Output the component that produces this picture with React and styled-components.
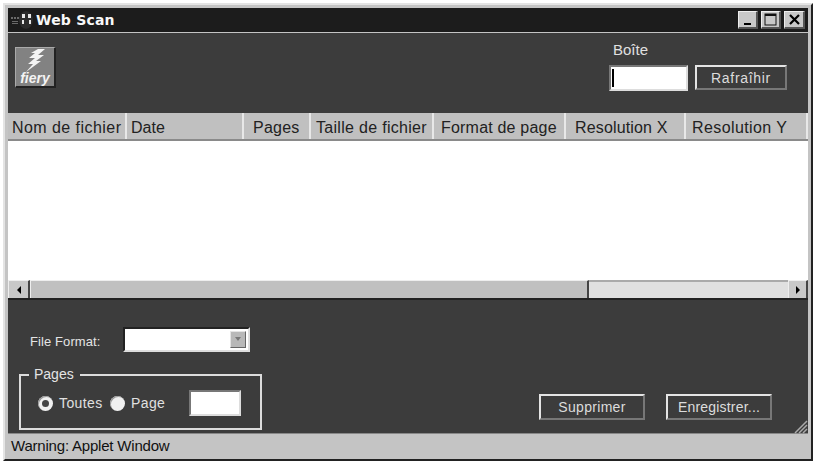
import React from 'react';
import styled, { createGlobalStyle } from 'styled-components';

const Global = createGlobalStyle`
  html, body { margin: 0; padding: 0; background: #fff; }
  body { width: 817px; height: 467px; overflow: hidden; font-family: "Liberation Sans", Arial, sans-serif; }
  * { box-sizing: border-box; }
`;

const Page = styled.div`
  padding: 3px 0 0 3px;
  width: 817px;
  height: 467px;
`;
const Win = styled.div`
  width: 810px;
  height: 458px;
  background: #c4c4c4;
  border-top: 2px solid #e4e4e4;
  border-left: 2px solid #e4e4e4;
  border-right: 2px solid #222;
  border-bottom: 2px solid #222;
  padding: 3px;
  display: flex;
  flex-direction: column;
`;
const TitleBar = styled.div`
  height: 24px;
  flex: none;
  background: #1c1c1c;
  display: flex;
  align-items: center;
  padding: 0 3px 0 2px;
  gap: 2px;
`;
const AppIcon = styled.svg`
  width: 24px;
  height: 20px;
  flex: none;
`;
const TitleText = styled.div`
  color: #f8f8f8;
  font: bold 14px "DejaVu Sans", sans-serif;
  letter-spacing: 0.2px;
  flex: 1;
`;
const Controls = styled.div`
  display: flex;
  gap: 3px;
  align-items: center;
`;
const WinBtn = styled.div`
  width: ${p => p.$w || 20}px;
  height: 18px;
  background: #c8c8c8;
  border-top: 1px solid #eee;
  border-left: 1px solid #eee;
  border-right: 2px solid #555;
  border-bottom: 2px solid #555;
  display: flex;
  align-items: center;
  justify-content: center;
`;
const Toolbar = styled.div`
  margin-top: 1px;
  height: 80px;
  flex: none;
  background: #3c3c3c;
  display: flex;
  justify-content: space-between;
  padding: 9px 21px 0 7px;
`;
const Logo = styled.div`
  width: 41px;
  height: 41px;
  margin-top: 5px;
  background: #828282;
  border-top: 1px solid #aaa;
  border-left: 1px solid #aaa;
  border-right: 2px solid #222;
  border-bottom: 2px solid #222;
  display: flex;
  flex-direction: column;
  align-items: center;
  overflow: hidden;
`;
const LogoText = styled.span`
  color: #f4f4f4;
  font: italic bold 14px/12px "Liberation Sans", sans-serif;
  margin-top: -1px;
`;
const BoxArea = styled.div`
  display: flex;
  flex-direction: column;
`;
const BoxLabel = styled.div`
  color: #e0e0e0;
  font-size: 15px;
  line-height: 16px;
  padding-left: 4px;
  margin-bottom: 7px;
`;
const BoxRow = styled.div`
  display: flex;
  gap: 7px;
`;
const Field = styled.div`
  width: ${p => p.$w}px;
  height: ${p => p.$h}px;
  flex: none;
  background: #fff;
  border-top: 2px solid #777;
  border-left: 2px solid #777;
  border-right: 2px solid #ddd;
  border-bottom: 2px solid #ddd;
  padding: 2px 0 2px 1px;
  display: flex;
`;
const Caret = styled.div`
  width: 2px;
  background: #000;
`;
const DarkButton = styled.div`
  width: ${p => p.$w}px;
  height: ${p => p.$h}px;
  background: #3c3c3c;
  border-top: 2px solid #e4e4e4;
  border-left: 2px solid #e4e4e4;
  border-right: 2px solid #777;
  border-bottom: 2px solid #777;
  color: #dcdcdc;
  font-size: 14px;
  letter-spacing: ${p => p.$ls || 0}px;
  display: flex;
  align-items: center;
  justify-content: center;
`;
const Header = styled.div`
  height: 28px;
  flex: none;
  display: flex;
  background: #c0c0c0;
  border-bottom: 2px solid #8a8a8a;
  overflow: hidden;
`;
const HeadCell = styled.div`
  width: ${p => p.$w}px;
  flex: none;
  border-right: 2px solid #e8e8e8;
  color: #222;
  font-size: 16px;
  line-height: 25px;
  padding: 2px 0 0 ${p => p.$pl}px;
  letter-spacing: ${p => p.$ls || 0}px;
  white-space: nowrap;
`;
const TableBody = styled.div`
  height: 139px;
  flex: none;
  background: #fff;
`;
const ScrollBar = styled.div`
  height: 20px;
  flex: none;
  display: flex;
  background: #e0e0e0;
  border-bottom: 2px solid #222;
`;
const ScrollBtn = styled.div`
  width: ${p => p.$w}px;
  flex: none;
  background: #c8c8c8;
  border-top: 1px solid #eee;
  border-left: 1px solid #eee;
  border-right: 2px solid #444;
  display: flex;
  align-items: center;
  justify-content: center;
`;
const Thumb = styled.div`
  width: 559px;
  flex: none;
  background: #c0c0c0;
  border-top: 1px solid #eee;
  border-left: 1px solid #eee;
  border-right: 2px solid #444;
`;
const Track = styled.div`
  flex: 1;
  border-top: 2px solid #aaa;
  background: #e0e0e0;
`;
const Lower = styled.div`
  position: relative;
  flex: 1;
  background: #3c3c3c;
  display: flex;
  justify-content: space-between;
  align-items: flex-end;
  padding: 0 36px 13px 11px;
  border-bottom: 1px solid #888;
`;
const LeftCol = styled.div`
  display: flex;
  flex-direction: column;
  gap: 22px;
  margin-bottom: -10px;
`;
const FormatRow = styled.div`
  display: flex;
  align-items: center;
  color: #e4e4e4;
  font-size: 13px;
  letter-spacing: 0.1px;
  padding-left: 11px;
`;
const FormatLabel = styled.span`
  width: 93px;
  padding-top: 3px;
`;
const Combo = styled.div`
  width: 127px;
  height: 25px;
  background: #fff;
  border-top: 2px solid #222;
  border-left: 2px solid #222;
  border-right: 2px solid #ddd;
  border-bottom: 2px solid #ddd;
  display: flex;
  justify-content: flex-end;
  align-items: center;
  padding-right: 2px;
`;
const ComboBtn = styled.div`
  width: 16px;
  height: 17px;
  background: #b8b8b8;
  border-top: 1px solid #e4e4e4;
  border-left: 1px solid #e4e4e4;
  border-right: 1px solid #666;
  border-bottom: 1px solid #666;
  display: flex;
  align-items: center;
  justify-content: center;
`;
const Group = styled.div`
  position: relative;
  width: 243px;
  height: 56px;
  border: 2px solid #dcdcdc;
  display: flex;
  align-items: center;
  padding: 2px 0 0 17px;
  color: #e0e0e0;
  font-size: 14px;
  letter-spacing: 0.4px;
`;
const Legend = styled.span`
  position: absolute;
  left: 8px;
  top: -10px;
  background: #3c3c3c;
  padding: 0 6px 0 5px;
  line-height: 16px;
  font-size: 14px;
  letter-spacing: 0;
  color: #e4e4e4;
`;
const Radio = styled.span`
  width: 15px;
  height: 15px;
  flex: none;
  border-radius: 50%;
  background: #f0f0f0;
  box-shadow: inset 1px 1px 0 #999;
  display: flex;
  align-items: center;
  justify-content: center;
  margin-right: 6px;
`;
const Dot = styled.span`
  width: 7px;
  height: 7px;
  border-radius: 50%;
  background: #444;
`;
const RadioLabel = styled.span`
  width: ${p => p.$w}px;
  flex: none;
`;
const Actions = styled.div`
  display: flex;
  gap: 21px;
`;
const Grip = styled.svg`
  position: absolute;
  right: 0;
  bottom: -1px;
  width: 16px;
  height: 16px;
`;
const Status = styled.div`
  height: 22px;
  flex: none;
  color: #111;
  font-size: 15px;
  line-height: 23px;
  letter-spacing: -0.2px;
  padding-left: 3px;
  white-space: nowrap;
`;

const cols = [
  ['Nom de fichier', 119, 4, 0.45],
  ['Date', 117, 4, 0],
  ['Pages', 67, 9, 0.25],
  ['Taille de fichier', 123, 5, 0.3],
  ['Format de page', 132, 7, 0.2],
  ['Resolution X', 120, 9, 0.15],
  ['Resolution Y', 122, 6, 0.4],
];

export default function App() {
  return (
    <Page>
      <Global />
      <Win>
        <TitleBar>
          <AppIcon viewBox="0 0 24 20">
            <g fill="#6a6a6a">
              <rect x="1" y="7" width="2" height="2" /><rect x="4" y="7" width="2" height="2" /><rect x="7" y="7" width="2" height="2" />
              <rect x="2" y="11" width="6" height="1" /><rect x="2" y="13" width="6" height="1" />
            </g>
            <ellipse cx="16" cy="10" rx="7" ry="9" fill="#2c2c2c" />
            <g fill="#e8e8e8">
              <path d="M12 4h3v4h-3zM18 4h3v4h-3zM12 10h2v4h-2zM19 10h2v4h-2z" />
            </g>
          </AppIcon>
          <TitleText>Web Scan</TitleText>
          <Controls>
            <WinBtn>
              <svg width="12" height="12" viewBox="0 0 12 12"><rect x="2" y="9" width="7" height="2" fill="#000" /></svg>
            </WinBtn>
            <WinBtn>
              <svg width="13" height="13" viewBox="0 0 13 13"><rect x="1" y="1" width="11" height="11" fill="none" stroke="#111" strokeWidth="1" /><rect x="1" y="1" width="11" height="2" fill="#111" /></svg>
            </WinBtn>
            <WinBtn $w={21}>
              <svg width="13" height="13" viewBox="0 0 13 13"><path d="M2 2L11 11M11 2L2 11" stroke="#000" strokeWidth="2.2" /></svg>
            </WinBtn>
          </Controls>
        </TitleBar>
        <Toolbar>
          <Logo>
            <svg width="26" height="25" viewBox="0 0 26 25">
              <path d="M16 1L23 1L16 7L22 7L14 13L19 13L4 24L11 16L6 16L13 10L7 10L13 5L9 5Z" fill="#f4f4f4" />
            </svg>
            <LogoText>fiery</LogoText>
          </Logo>
          <BoxArea>
            <BoxLabel>Boîte</BoxLabel>
            <BoxRow>
              <Field $w={79} $h={26}><Caret /></Field>
              <DarkButton $w={92} $h={25} $ls={0.7}>Rafraîhir</DarkButton>
            </BoxRow>
          </BoxArea>
        </Toolbar>
        <Header>
          {cols.map(([t, w, pl, ls]) => (
            <HeadCell key={t} $w={w} $pl={pl} $ls={ls}>{t}</HeadCell>
          ))}
        </Header>
        <TableBody />
        <ScrollBar>
          <ScrollBtn $w={22}>
            <svg width="6" height="8" viewBox="0 0 6 8"><path d="M5 0L1 4L5 8Z" fill="#000" /></svg>
          </ScrollBtn>
          <Thumb />
          <Track />
          <ScrollBtn $w={20}>
            <svg width="6" height="8" viewBox="0 0 6 8"><path d="M1 0L5 4L1 8Z" fill="#000" /></svg>
          </ScrollBtn>
        </ScrollBar>
        <Lower>
          <LeftCol>
            <FormatRow>
              <FormatLabel>File Format:</FormatLabel>
              <Combo>
                <ComboBtn>
                  <svg width="8" height="5" viewBox="0 0 8 5"><path d="M1 0H7L4 4Z" fill="#777" /></svg>
                </ComboBtn>
              </Combo>
            </FormatRow>
            <Group>
              <Legend>Pages</Legend>
              <Radio><Dot /></Radio>
              <RadioLabel $w={51}>Toutes</RadioLabel>
              <Radio />
              <RadioLabel $w={58}>Page</RadioLabel>
              <Field $w={52} $h={26} />
            </Group>
          </LeftCol>
          <Actions>
            <DarkButton $w={106} $h={26} $ls={0.3}>Supprimer</DarkButton>
            <DarkButton $w={106} $h={26} $ls={0.2}>Enregistrer...</DarkButton>
          </Actions>
          <Grip viewBox="0 0 16 16">
            <path d="M15 3L3 15M15 7L7 15M15 11L11 15" stroke="#aaa" strokeWidth="1.5" />
          </Grip>
        </Lower>
        <Status>Warning: Applet Window</Status>
      </Win>
    </Page>
  );
}
